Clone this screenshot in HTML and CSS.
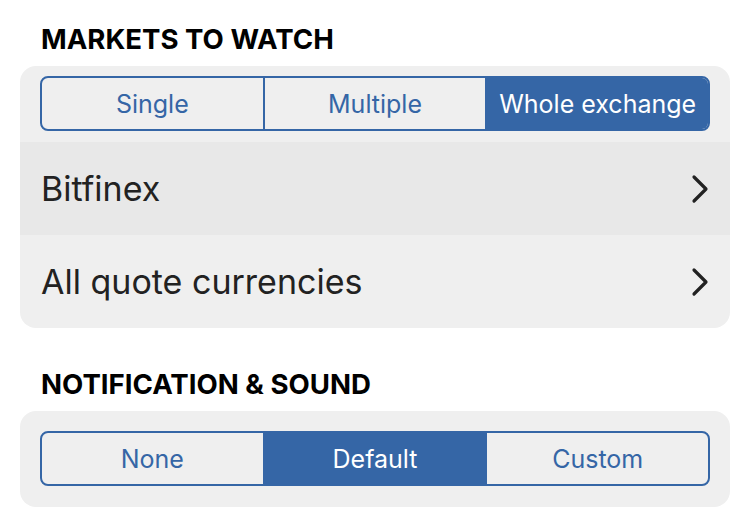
FILE: index.html
```html
<!DOCTYPE html>
<html lang="en">
<head>
    <meta charset="UTF-8">
    <meta name="viewport" content="width=device-width, initial-scale=1.0">
    <title>Alert settings</title>
    <link rel="stylesheet" href="styles.css">
</head>
<body>
    <h2 class="section-title first">MARKETS TO WATCH</h2>
    <div class="card">
        <div class="segments">
            <div class="segment">Single</div>
            <div class="segment">Multiple</div>
            <div class="segment active">Whole exchange</div>
        </div>
        <div class="row selected">
            <span>Bitfinex</span>
            <svg class="chevron" viewBox="0 0 18 30"><path d="M3 3 L15 15 L3 27"/></svg>
        </div>
        <div class="row">
            <span>All quote currencies</span>
            <svg class="chevron" viewBox="0 0 18 30"><path d="M3 3 L15 15 L3 27"/></svg>
        </div>
    </div>

    <h2 class="section-title">NOTIFICATION &amp; SOUND</h2>
    <div class="card">
        <div class="segments last">
            <div class="segment">None</div>
            <div class="segment active">Default</div>
            <div class="segment">Custom</div>
        </div>
    </div>
</body>
</html>
```

FILE: styles.css
```css
body{
    margin: 0;
    background: #fff;
    font-family: Inter, 'Noto Sans', sans-serif;
    color: #222;
}
.section-title{
    margin: 0;
    padding: 0 41px;
    font-size: 27.6px;
    font-weight: 700;
    line-height: 32px;
    color: #000;
    height: 32px;
    padding-top: 40px;
    padding-bottom: 11px;
}
.section-title.first{
    padding-top: 23px;
    padding-bottom: 11px;
}
.card{
    background: #efefef;
    margin: 0 20px;
    border-radius: 16px;
    overflow: hidden;
}
.segments{
    display: flex;
    margin: 10px 20px 11px;
    border: 2px solid #3566a6;
    border-radius: 8px;
    overflow: hidden;
    height: 51px;
}
.segments.last{
    margin: 20px 20px 21px;
}
.segment{
    flex: 1;
    display: flex;
    align-items: center;
    justify-content: center;
    font-size: 25px;
    color: #3566a6;
    border-left: 2px solid #3566a6;
}
.segment:first-child{
    border-left: none;
}
.segment.active{
    background: #3566a6;
    color: #fff;
}
.row{
    display: flex;
    align-items: center;
    justify-content: space-between;
    height: 93px;
    padding: 0 21px;
    font-size: 34px;
}
.row.selected{
    background: #e8e8e8;
}
.chevron{
    width: 18px;
    height: 30px;
    fill: none;
    stroke: #222;
    stroke-width: 3.2;
    stroke-linecap: round;
    stroke-linejoin: round;
}
```
